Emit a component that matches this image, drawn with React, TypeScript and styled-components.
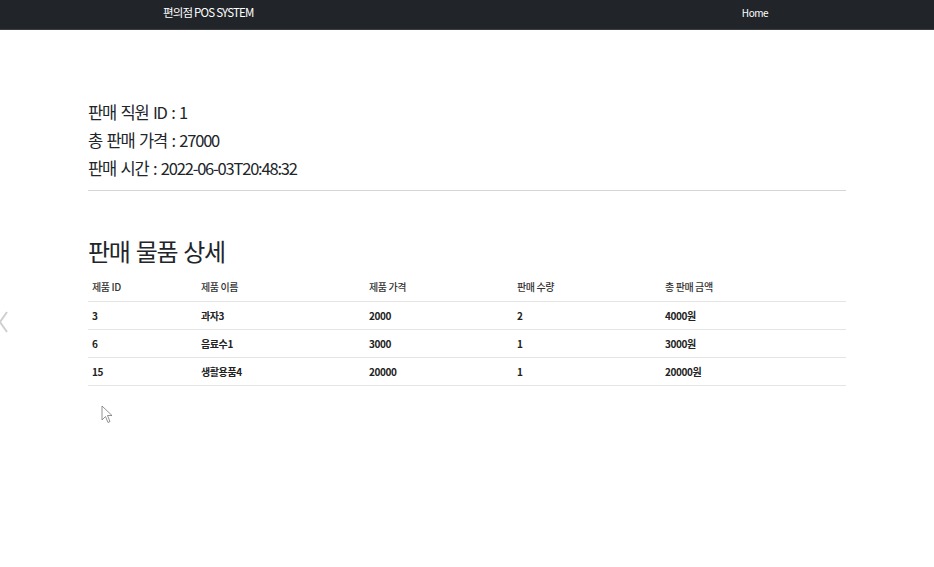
import React from "react";
import styled, { createGlobalStyle } from "styled-components";

const Global = createGlobalStyle`
  html, body { margin: 0; padding: 0; background: #fff; }
  body { font-family: "Noto Sans CJK KR", "Noto Sans", sans-serif; color: #212529; }
  * { box-sizing: border-box; }
`;

const Page = styled.div`
  position: relative;
  width: 934px;
  height: 567px;
  overflow: hidden;
`;

const Nav = styled.nav`
  height: 30px;
  background: #212529;
  border-bottom: 1px solid #3a3f44;
  display: flex;
  align-items: center;
  padding: 0 166px 5px 163px;
  justify-content: space-between;
`;

const Brand = styled.span`
  color: #fff;
  font-size: 11.5px;
  letter-spacing: -0.8px;
`;

const NavLink = styled.span`
  color: #fff;
  font-size: 10px;
  letter-spacing: -0.5px;
`;

const Container = styled.main`
  width: 758px;
  margin: 0 0 0 88px;
  padding-top: 68px;
`;

const InfoLine = styled.div`
  font-size: 16.5px;
  line-height: 28px;
  letter-spacing: -1.2px;
  word-spacing: 2px;
  color: #212529;
`;

const Rule = styled.hr`
  margin: 8px 0 0 0;
  border: 0;
  border-top: 1px solid #d6d6d6;
`;

const Heading = styled.h2`
  margin: 44px 0 0 0;
  font-size: 24px;
  font-weight: 400;
  line-height: 32px;
  letter-spacing: -1.3px;
  word-spacing: 2px;
`;

const Table = styled.table`
  width: 100%;
  border-collapse: collapse;
  margin-top: 6px;
  font-size: 10px;
  letter-spacing: -0.4px;
`;

const Th = styled.th<{ $w: number }>`
  width: ${(p) => p.$w}px;
  text-align: left;
  font-weight: 500;
  padding: 0 4px;
  height: 28px;
  border-bottom: 1px solid #e4e4e4;
  color: #333;
`;

const Td = styled.td`
  padding: 0 4px;
  height: 28px;
  font-weight: 700;
  border-bottom: 1px solid #e4e4e4;
  color: #222;
`;

const Chevron = styled.svg`
  position: absolute;
  left: -2px;
  top: 310px;
`;

const Cursor = styled.svg`
  position: absolute;
  left: 101px;
  top: 405px;
`;

const cols = [
  { label: "제품 ID", w: 109 },
  { label: "제품 이름", w: 168 },
  { label: "제품 가격", w: 148 },
  { label: "판매 수량", w: 148 },
  { label: "총 판매 금액", w: 185 },
];

const rows = [
  ["3", "과자3", "2000", "2", "4000원"],
  ["6", "음료수1", "3000", "1", "3000원"],
  ["15", "생활용품4", "20000", "1", "20000원"],
];

export default function App() {
  return (
    <Page>
      <Global />
      <Nav>
        <Brand>편의점 POS SYSTEM</Brand>
        <NavLink>Home</NavLink>
      </Nav>
      <Container>
        <InfoLine>판매 직원 ID : 1</InfoLine>
        <InfoLine>총 판매 가격 : 27000</InfoLine>
        <InfoLine>판매 시간 : 2022-06-03T20:48:32</InfoLine>
        <Rule />
        <Heading>판매 물품 상세</Heading>
        <Table>
          <thead>
            <tr>
              {cols.map((c) => (
                <Th key={c.label} $w={c.w}>{c.label}</Th>
              ))}
            </tr>
          </thead>
          <tbody>
            {rows.map((r) => (
              <tr key={r[0]}>
                {r.map((v, i) => (
                  <Td key={i}>{v}</Td>
                ))}
              </tr>
            ))}
          </tbody>
        </Table>
      </Container>
      <Chevron width="12" height="24" viewBox="0 0 12 24">
        <polyline points="9,2 2,12 9,22" fill="none" stroke="#cfcfcf" strokeWidth="2" />
      </Chevron>
      <Cursor width="12" height="20" viewBox="0 0 12 20">
        <path d="M1 1 L1 15 L4.5 11.5 L7 17.5 L9 16.5 L6.5 10.5 L11 10.5 Z" fill="#fff" stroke="#777" strokeWidth="0.8" />
      </Cursor>
    </Page>
  );
}
